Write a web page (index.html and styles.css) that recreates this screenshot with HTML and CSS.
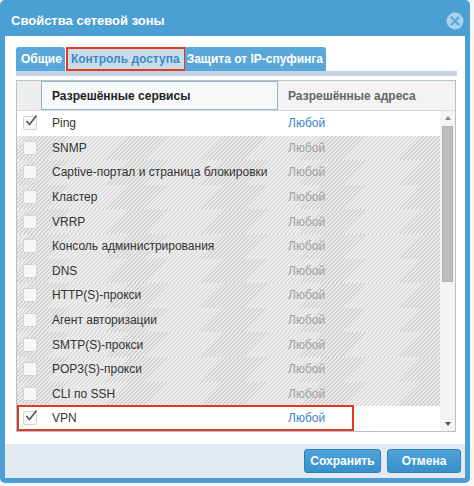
FILE: index.html
```html
<!DOCTYPE html>
<html>
<head>
    <link rel="stylesheet" href="styles.css">
</head>
<body>
    <div class="dialog">
        <div class="titlebar">
            <span class="title">Свойства сетевой зоны</span>
            <svg class="close" width="18" height="18" viewBox="0 0 18 18">
                <circle cx="9" cy="9" r="8.5" fill="#a8d3ef"/>
                <path d="M5.5 5.5 L12.5 12.5 M12.5 5.5 L5.5 12.5" stroke="#5aa6d8" stroke-width="2.2" stroke-linecap="round"/>
            </svg>
        </div>

        <div class="content">
            <div class="tabs">
                <div class="tab">Общие</div>
                <div class="tab active">Контроль доступа</div>
                <div class="tab last">Защита от IP-спуфинга</div>
            </div>
            <div class="tab-line"></div>

            <div class="grid">
                <div class="grid-head">
                    <div class="hc hc-check"></div>
                    <div class="hc hc-service">Разрешённые сервисы</div>
                    <div class="hc hc-addr">Разрешённые адреса</div>
                </div>
                <div class="grid-body">
                    <div class="rows">
                        <div class="row on">
                            <span class="cb checked"><svg viewBox="0 0 14 14"><path d="M2.5 7 L5.5 10.5 L12.5 1.5" fill="none" stroke="#555" stroke-width="1.6"/></svg></span>
                            <span class="svc">Ping</span>
                            <span class="addr">Любой</span>
                        </div>
                        <div class="row"><span class="cb"></span><span class="svc">SNMP</span><span class="addr">Любой</span></div>
                        <div class="row"><span class="cb"></span><span class="svc">Captive-портал и страница блокировки</span><span class="addr">Любой</span></div>
                        <div class="row"><span class="cb"></span><span class="svc">Кластер</span><span class="addr">Любой</span></div>
                        <div class="row"><span class="cb"></span><span class="svc">VRRP</span><span class="addr">Любой</span></div>
                        <div class="row"><span class="cb"></span><span class="svc">Консоль администрирования</span><span class="addr">Любой</span></div>
                        <div class="row"><span class="cb"></span><span class="svc">DNS</span><span class="addr">Любой</span></div>
                        <div class="row"><span class="cb"></span><span class="svc">HTTP(S)-прокси</span><span class="addr">Любой</span></div>
                        <div class="row"><span class="cb"></span><span class="svc">Агент авторизации</span><span class="addr">Любой</span></div>
                        <div class="row"><span class="cb"></span><span class="svc">SMTP(S)-прокси</span><span class="addr">Любой</span></div>
                        <div class="row"><span class="cb"></span><span class="svc">POP3(S)-прокси</span><span class="addr">Любой</span></div>
                        <div class="row"><span class="cb"></span><span class="svc">CLI по SSH</span><span class="addr">Любой</span></div>
                        <div class="row on">
                            <span class="cb checked"><svg viewBox="0 0 14 14"><path d="M2.5 7 L5.5 10.5 L12.5 1.5" fill="none" stroke="#555" stroke-width="1.6"/></svg></span>
                            <span class="svc">VPN</span>
                            <span class="addr">Любой</span>
                            <span class="mark"></span>
                        </div>
                    </div>
                    <div class="scrollbar">
                        <div class="arrow up"></div>
                        <div class="track"><div class="thumb"></div></div>
                        <div class="arrow down"></div>
                    </div>
                </div>
            </div>
        </div>

        <div class="footer">
            <button class="btn btn-save">Сохранить</button>
            <button class="btn btn-cancel">Отмена</button>
        </div>
    </div>
</body>
</html>
```

FILE: styles.css
```css
body {
    margin: 0;
    background: #f4f6f8;
    font-family: "Liberation Sans", Arial, sans-serif;
    font-size: 12px;
    color: #333;
}

.dialog {
    width: 460px;
    padding: 0 5px 5px;
    background: #4a9fd3;
    border-radius: 5px;
}

.titlebar {
    height: 36px;
    display: flex;
    align-items: center;
    justify-content: space-between;
    padding: 0 1px 0 6px;
}

.title {
    color: #fff;
    font-weight: bold;
    font-size: 13px;
    margin-top: 4px;
}

.close {
    display: block;
    margin-top: 5px;
}

.content {
    background: #fff;
    padding: 11px 9px 12px 11px;
}

.tabs {
    display: flex;
    height: 24px;
    gap: 1px;
}

.tab {
    background: #5aa7d9;
    color: #fff;
    font-weight: bold;
    padding: 0 3px 0 5px;
    line-height: 24px;
    border-radius: 3px 3px 0 0;
}

.tab.active {
    background: #c9dce8;
    color: #3a8bcb;
    border: 2px solid #e03a22;
    line-height: 20px;
    padding: 0 4px 0 3px;
    border-radius: 0;
}

.tab.last {
    padding: 0 3px 0 2px;
    margin-left: -2px;
}

.tab-line {
    height: 5px;
    background: #c1d6e4;
    margin-right: -1px;
}

.grid {
    margin-top: 4px;
    border: 1px solid #b4c2cc;
}

.grid-head {
    display: grid;
    grid-template-columns: 24px 237px 1fr;
    height: 29px;
    border-bottom: 1px solid #d6dde2;
    font-weight: bold;
}

.hc {
    display: flex;
    align-items: center;
}

.hc-check {
    background: #eeeeee;
}

.hc-service {
    background: #f7f9fb;
    border: 1px solid #93b4c9;
    padding-left: 10px;
    color: #222;
}

.hc-addr {
    background: #f3f3f3;
    padding-left: 10px;
    color: #666;
}

.grid-body {
    display: flex;
}

.rows {
    flex: 1;
}

.row {
    position: relative;
    display: grid;
    grid-template-columns: 24px 237px 1fr;
    align-items: center;
    height: 24.6px;
    background: repeating-linear-gradient(-45deg, #d0d0d0 0 1px, #ededed 1px 2.8px);
}

.row.on {
    background: #fff;
}

.cb {
    width: 12px;
    height: 12px;
    margin-left: 6px;
    border: 1px solid #d4d4d4;
    border-radius: 2px;
    background: #f7f7f7;
    position: relative;
}

.cb svg {
    position: absolute;
    width: 14px;
    height: 14px;
    left: 0;
    top: -3px;
}

.svc {
    padding-left: 11px;
    color: #333;
}

.addr {
    padding-left: 10px;
    color: #a0a0a0;
}

.row.on .addr {
    color: #3d82c4;
}

.mark {
    position: absolute;
    left: 0;
    top: -1px;
    width: 337px;
    bottom: 0;
    border: 2px solid #e03a22;
    box-sizing: border-box;
}

.scrollbar {
    width: 15px;
    display: flex;
    flex-direction: column;
    background: #f4f4f4;
}

.arrow {
    height: 14px;
    display: flex;
    align-items: center;
    justify-content: center;
}

.arrow::after {
    content: "";
    border-left: 3px solid transparent;
    border-right: 3px solid transparent;
}

.arrow.up::after {
    border-bottom: 4px solid #888;
}

.arrow.down::after {
    border-top: 4px solid #555;
}

.track {
    flex: 1;
    padding: 1px 2px 0 2px;
}

.thumb {
    height: 154px;
    background: #bdbdbd;
    border: 1px solid #b0b0b0;
}

.footer {
    height: 34px;
    background: #e3eaf0;
    display: flex;
    justify-content: flex-end;
    align-items: center;
    gap: 6px;
    padding-right: 4px;
}

.btn {
    height: 24px;
    border: 1px solid #2f80b8;
    border-radius: 3px;
    background: linear-gradient(#4ea3da, #3890cb);
    color: #fff;
    font-family: "Liberation Sans", Arial, sans-serif;
    font-weight: bold;
    font-size: 12px;
    padding: 0;
}

.btn-save {
    width: 77px;
}

.btn-cancel {
    width: 74px;
}
```
